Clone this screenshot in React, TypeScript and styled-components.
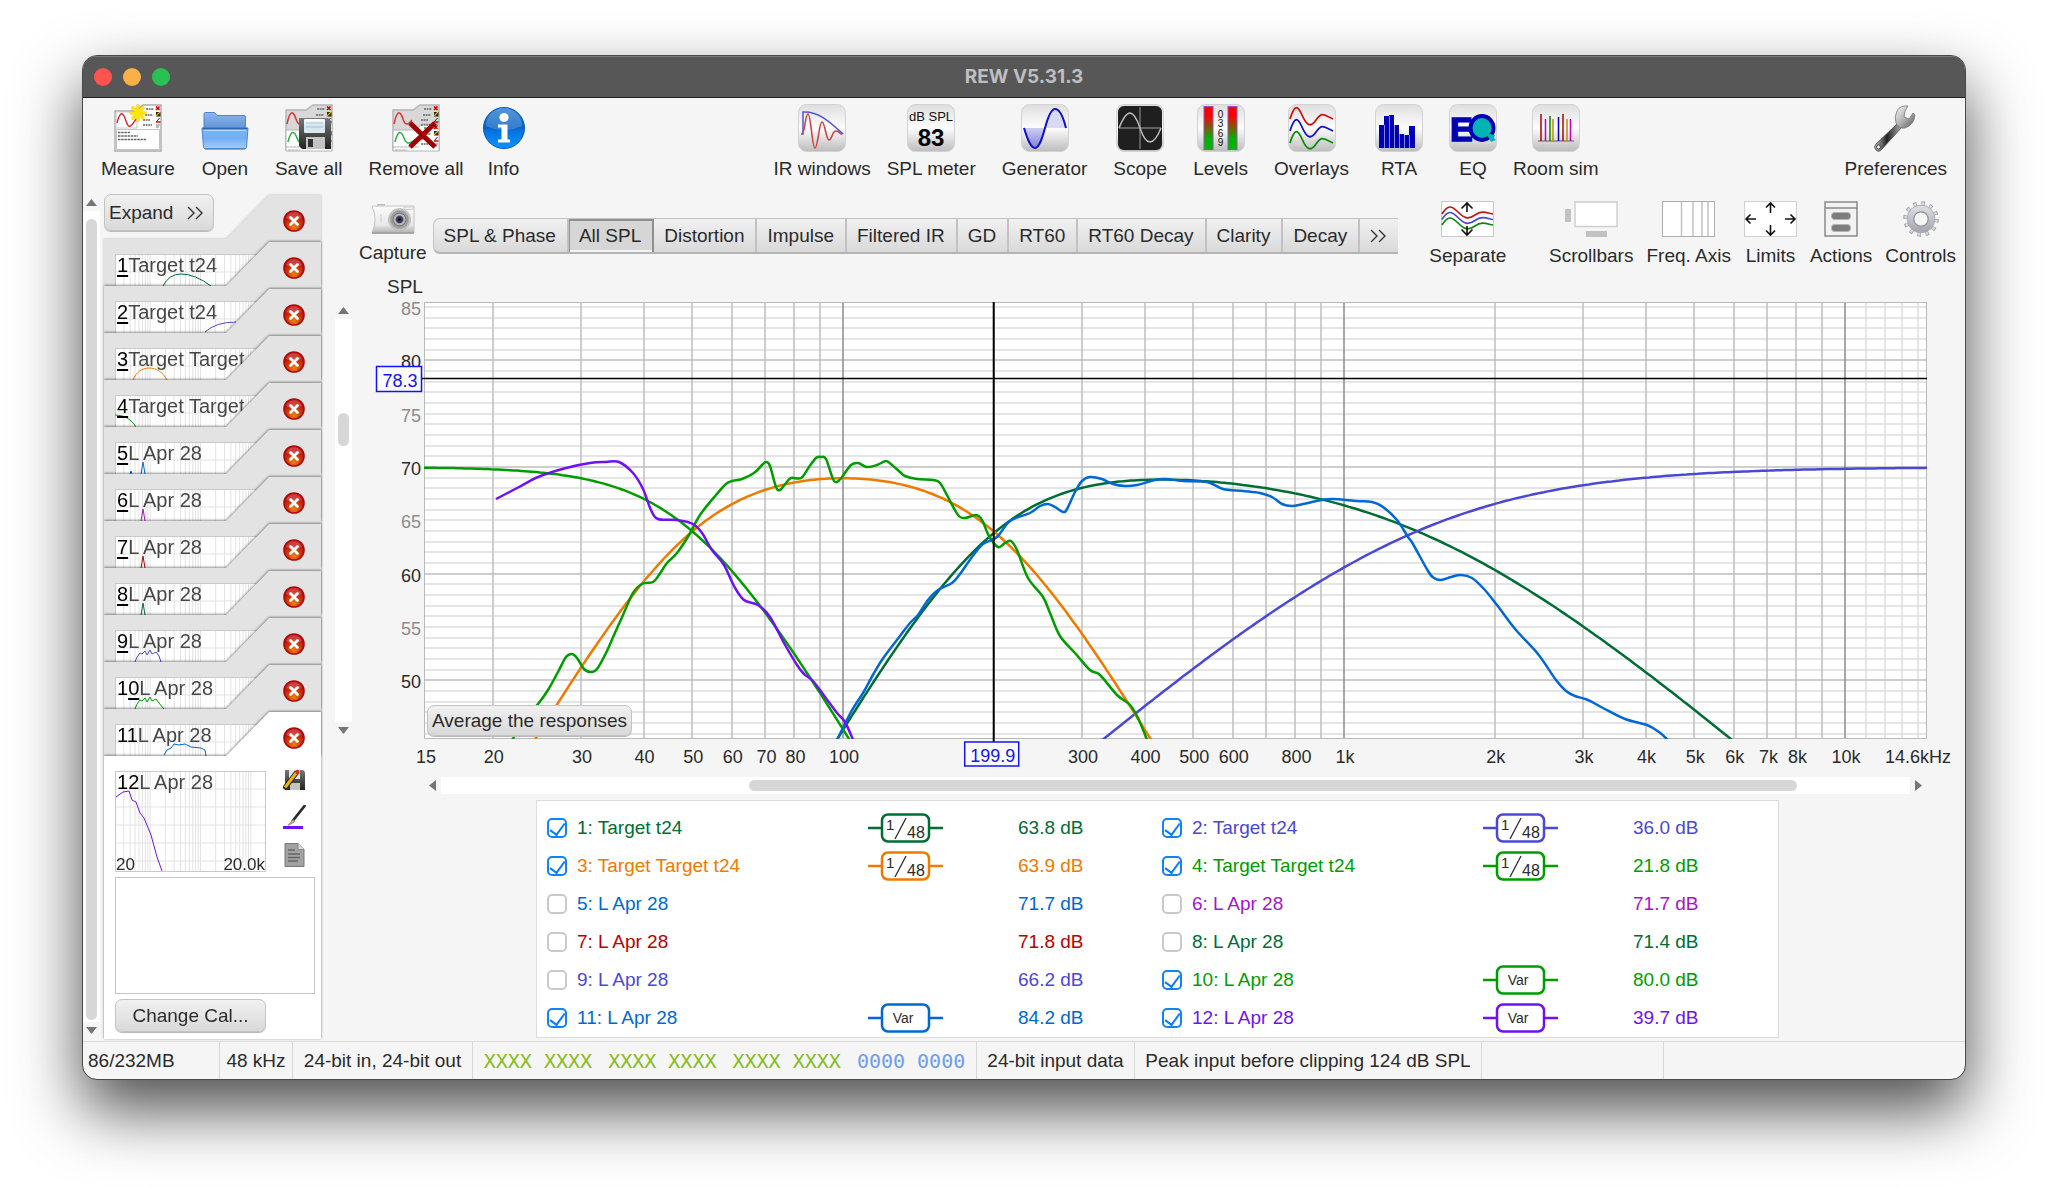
import React, { useState } from 'react';
import styled, { createGlobalStyle, css } from 'styled-components';

const SANS = '"Liberation Sans", Arial, sans-serif';
const INK = '#2b2b2b';
const PANEL = '#f5f5f5';

const C = {
  forest: '#006d35',
  indigo: '#4b48d6',
  orange: '#ee7a00',
  green: '#009c00',
  blue: '#0068d4',
  magenta: '#a814c8',
  red: '#b80000',
  violet: '#6e12f5',
};

const GlobalStyle = createGlobalStyle`
  * { box-sizing: border-box; }
  body { margin: 0; background: #fff; font-family: ${SANS}; font-size: 19px; line-height: 22px; color: ${INK}; }
  button, input, textarea { font: inherit; color: inherit; margin: 0; }
  svg { display: block; }
  svg text { font-family: ${SANS}; }
`;

/* ---------- window ---------- */

const Page = styled.div`
  min-height: 100vh;
  padding: 55px 82px 100px;
  overflow: hidden;
`;

const Window = styled.div`
  border: 1px solid #4a4a4a;
  border-radius: 15px;
  background: ${PANEL};
  background-clip: padding-box;
  box-shadow: 0 30px 65px rgba(0, 0, 0, 0.7);
  overflow: hidden;
`;

const TitleBar = styled.header`
  display: grid;
  grid-template-columns: 1fr auto 1fr;
  align-items: center;
  height: 42px;
  padding: 0 11px;
  background: #575757;
  border-top: 1px solid #7a7a7a;
  border-bottom: 1px solid #1f1f1f;
`;

const Lights = styled.div`
  display: flex;
  gap: 11px;
`;

const Light = styled.button<{ $color: string }>`
  width: 18px;
  height: 18px;
  padding: 0;
  border: 0;
  border-radius: 50%;
  background: ${p => p.$color};
`;

const Title = styled.h1`
  margin: 0;
  font: 700 19px/22px Inter, ${SANS};
  color: #bfbfbf;
`;

/* ---------- toolbar ---------- */

const Toolbar = styled.nav`
  display: flex;
  justify-content: space-between;
  align-items: flex-start;
  height: 92px;
  padding: 6px 18px 0;
`;

const ToolGroup = styled.div<{ $gap?: number }>`
  display: flex;
  gap: ${p => p.$gap ?? 26}px;
`;

const ToolButton = styled.button<{ $gap?: number }>`
  display: flex;
  flex-direction: column;
  align-items: center;
  gap: ${p => p.$gap ?? 6}px;
  padding: 0;
  border: 0;
  background: none;
  white-space: nowrap;
`;

function Tool({ icon, label, gap }: { icon: React.ReactNode; label: string; gap?: number }) {
  return (
    <ToolButton type="button" $gap={gap}>
      {icon}
      <span>{label}</span>
    </ToolButton>
  );
}

const Icon = ({ children, w = 48, h = 48 }: { children: React.ReactNode; w?: number; h?: number }) => (
  <svg width={w} height={h} viewBox={`0 0 ${w} ${h}`} fill="none" aria-hidden="true">
    {children}
  </svg>
);

const Tile = ({ children }: { children: React.ReactNode }) => (
  <Icon>
    <rect x="0.5" y="0.5" width="47" height="47" rx="8" fill="url(#tile)" stroke="#d2d2d2" />
    {children}
  </Icon>
);

const SharedDefs = () => (
  <svg width="0" height="0" style={{ position: 'absolute' }} aria-hidden="true">
    <defs>
      <linearGradient id="tile" x1="0" y1="0" x2="0" y2="1">
        <stop offset="0" stopColor="#dedede" />
        <stop offset="0.5" stopColor="#fdfdfd" />
        <stop offset="1" stopColor="#bcbcbc" />
      </linearGradient>
      <linearGradient id="folderBack" x1="0" y1="0" x2="0" y2="1">
        <stop offset="0" stopColor="#8fb6e8" />
        <stop offset="1" stopColor="#5f93d8" />
      </linearGradient>
      <linearGradient id="folderFront" x1="0" y1="0" x2="0" y2="1">
        <stop offset="0" stopColor="#7db4f6" />
        <stop offset="0.5" stopColor="#73adf3" />
        <stop offset="1" stopColor="#a3cdfc" />
      </linearGradient>
      <linearGradient id="info" x1="0" y1="0" x2="0" y2="1">
        <stop offset="0" stopColor="#2c7fd0" />
        <stop offset="0.5" stopColor="#0a62c4" />
        <stop offset="0.55" stopColor="#0670de" />
        <stop offset="1" stopColor="#0a95ff" />
      </linearGradient>
      <linearGradient id="meter" x1="0" y1="0" x2="0" y2="1">
        <stop offset="0.2" stopColor="#ff0000" />
        <stop offset="0.75" stopColor="#00b400" />
      </linearGradient>
      <linearGradient id="sineFill" x1="0" y1="0" x2="0" y2="1">
        <stop offset="0" stopColor="#cfcfF2" />
        <stop offset="1" stopColor="#8080d8" />
      </linearGradient>
      <linearGradient id="disk" x1="0" y1="0" x2="0" y2="1">
        <stop offset="0" stopColor="#777" />
        <stop offset="1" stopColor="#222" />
      </linearGradient>
      <linearGradient id="diskLabel" x1="0" y1="0" x2="0" y2="1">
        <stop offset="0" stopColor="#fff" />
        <stop offset="0.5" stopColor="#cfe3ee" />
        <stop offset="1" stopColor="#dfeaf0" />
      </linearGradient>
      <radialGradient id="close" cx="0.5" cy="0.8" r="0.6">
        <stop offset="0" stopColor="#f08010" />
        <stop offset="0.6" stopColor="#cc3a08" />
        <stop offset="1" stopColor="#c01010" />
      </radialGradient>
      <linearGradient id="steel" x1="0" y1="0" x2="1" y2="0">
        <stop offset="0" stopColor="#c9c9c9" />
        <stop offset="0.45" stopColor="#222" />
        <stop offset="1" stopColor="#b5b5b5" />
      </linearGradient>
      <linearGradient id="jaw" x1="0" y1="0" x2="1" y2="1">
        <stop offset="0" stopColor="#fafafa" />
        <stop offset="0.5" stopColor="#b4b4b4" />
        <stop offset="1" stopColor="#555" />
      </linearGradient>
      <linearGradient id="gear" x1="0" y1="0" x2="0" y2="1">
        <stop offset="0" stopColor="#d9d9df" />
        <stop offset="1" stopColor="#a9a9b4" />
      </linearGradient>
      <linearGradient id="camera" x1="0" y1="0" x2="0" y2="1">
        <stop offset="0" stopColor="#fbfbfb" />
        <stop offset="0.7" stopColor="#e8e8e8" />
        <stop offset="1" stopColor="#b0b0b0" />
      </linearGradient>
      <radialGradient id="lens">
        <stop offset="0" stopColor="#0c1030" />
        <stop offset="0.3" stopColor="#444a60" />
        <stop offset="0.4" stopColor="#b9b9b9" />
        <stop offset="0.75" stopColor="#999" />
        <stop offset="1" stopColor="#dedede" />
      </radialGradient>
    </defs>
  </svg>
);

const Scribbles = ({ y }: { y: number }) => (
  <g>
    <path d={`M32 ${y}h8M31 ${y + 6}h8M29 ${y + 11}h7M29 ${y + 16}h9`} stroke="#666" strokeWidth="1.4" strokeDasharray="2 0.6" />
    <path d={`M42 ${y - 2.5}l3.5 3.5M45.5 ${y - 2.5}l-3.5 3.5`} stroke="#c00" strokeWidth="1.6" />
    <rect x="42" y={y + 3} width="4.5" height="4.5" fill="#222" />
    <path d={`M42 ${y + 7}l4-4`} stroke="#eab000" strokeWidth="1.3" />
    <path d={`M45.5 ${y + 9}l-3 3.5`} stroke="#222" />
    <path d={`M42 ${y + 13}h4.5`} stroke="#d00" strokeWidth="1.3" />
    <path d={`M42 ${y + 16}h4M42 ${y + 18}h3`} stroke="#777" />
  </g>
);

const Star = () => (
  <g strokeLinecap="round">
    <path d="M24 2v14M17 9h14M19 4l10 10M29 4L19 14" stroke="#d9a400" strokeWidth="4" opacity="0.4" />
    <path d="M24 2v14M17 9h14M19 4l10 10M29 4L19 14" stroke="#ffe600" strokeWidth="2.6" />
  </g>
);

const MeasureIcon = () => (
  <Icon>
    <path d="M1 7h21l7-6h18v46H1z" fill="#fff" stroke="#ababab" strokeWidth="1.4" />
    <path d="M2 8h21v16H2z" fill="#fff" stroke="#c8c8c8" />
    <path d="M3 19c3-12 6-12 9-2s6 4 10-2" stroke="#d23" strokeWidth="1.4" />
    <path d="M2.5 25.5h43v20h-43z" fill="#fff" stroke="#c4c4c4" />
    <path d="M4 28.5h12M4 32h20M4 35.5h28" stroke="#666" strokeWidth="1.5" strokeDasharray="2.5 0.7" />
    <Scribbles y={5} />
    <Star />
  </Icon>
);

const Stack = () => (
  <g>
    <path d="M1 47V6h20l7-5h19v46" fill="#d8d8d8" stroke="#b4b4b4" strokeWidth="1.4" />
    <path d="M2 20c3-14 6-14 9-5s6 4 9 1" stroke="#d33" strokeWidth="1.5" />
    <path d="M1 26h22l7-6h17v27H1z" fill="#fff" stroke="#b4b4b4" />
    <path d="M3 38c3-12 6-12 9-4s6 5 12 1" stroke="#3a4" strokeWidth="1.5" />
    <Scribbles y={5} />
    <Scribbles y={24} />
    <path d="M1 43h26M3 46h12" stroke="#aaa" strokeDasharray="3 0.6" />
  </g>
);

const SaveIcon = () => (
  <Icon>
    <Stack />
    <path d="M14 14h29l3 3v28H17l-3-3z" fill="url(#disk)" />
    <rect x="19" y="15" width="21" height="14" rx="1" fill="url(#diskLabel)" />
    <path d="M21 19h17M21 23h17" stroke="#a9c4d3" />
    <rect x="21" y="33" width="19" height="12" fill="#c4c4c4" />
    <rect x="23" y="35" width="5" height="8" fill="#333" />
  </Icon>
);

const RemoveIcon = () => (
  <Icon>
    <Stack />
    <path d="M18 19l25 24M43 19L18 43" stroke="#a00000" strokeWidth="5" />
  </Icon>
);

const FolderIcon = () => (
  <Icon>
    <path d="M3 10q0-1.500 1.500-1.500h9l2.500 3h27q1.500 0 1.500 1.500v12H3z" fill="url(#folderBack)" stroke="#4f84cc" />
    <path d="M1 24h46l-1.500 19.500q0 1-1.500 1H4q-1.500 0-1.500-1z" fill="url(#folderFront)" stroke="#4a86d4" />
    <path d="M1.500 24.500h45" stroke="#2d66b8" strokeWidth="1.5" />
    <path d="M3 26.500h42" stroke="#b7d8ff" />
    <path d="M4 45.500h40" stroke="#9aa4b2" />
  </Icon>
);

const InfoIcon = () => (
  <Icon>
    <circle cx="24" cy="24" r="20.5" fill="url(#info)" stroke="#0a5cb8" />
    <path d="M6 22a18 18 0 0 1 36 0q-18 8-36 0z" fill="#fff" opacity="0.18" />
    <circle cx="24" cy="13.5" r="4.6" fill="#fff" />
    <path d="M18 20.5h9.500v15H30v3H18v-3h3.500v-12H18z" fill="#fff" />
  </Icon>
);

const IRIcon = () => (
  <Tile>
    <path d="M3 30h2V8c16-1 28 11 40 22" stroke="#5555d8" strokeWidth="1.5" />
    <path d="M4 30c3 0 3-20 6-20s4 34 7 34 4-26 7-26 4 18 7 18 3-9 7-9 3 3 6 3" stroke="#cc4444" strokeWidth="1.6" />
  </Tile>
);

const MeterIcon = () => (
  <Tile>
    <text x="24" y="17" fontSize="13" textAnchor="middle" fill="#111">dB SPL</text>
    <text x="24" y="42" fontSize="24" fontWeight="700" textAnchor="middle" fill="#000">83</text>
  </Tile>
);

const GeneratorIcon = () => (
  <Tile>
    <path d="M3 24c4 13 7 20 11 20s7-9 10-20z" fill="url(#sineFill)" />
    <path d="M24 24c3-11 6-19 10-19s8 7 11 19z" fill="#d9d9f4" />
    <path d="M3 24c4 13 7 20 11 20s7-9 10-20 6-19 10-19 8 7 11 19" stroke="#1010c8" strokeWidth="2" />
  </Tile>
);

const ScopeIcon = () => (
  <Tile>
    <rect x="2" y="2" width="44" height="44" rx="6" fill="#1f1f1f" />
    <path d="M24 3v42M3 24h42" stroke="#777" strokeWidth="1.4" />
    <path d="M3 24c4-10 7-15 11-15s7 6 10 15 6 14 10 14 7-4 11-14" stroke="#bbb" strokeWidth="1.5" />
  </Tile>
);

const LevelsIcon = () => (
  <Tile>
    <rect x="7" y="2.5" width="9" height="43" fill="url(#meter)" stroke="#9a50c0" />
    <rect x="31" y="2.5" width="9" height="43" fill="url(#meter)" stroke="#9a50c0" />
    {[0, 3, 6, 9].map((n, i) => (
      <text key={n} x="23.5" y={14 + i * 9.4} fontSize="10" textAnchor="middle" fill="#111">{n}</text>
    ))}
  </Tile>
);

const OverlaysIcon = () => (
  <Tile>
    {['#cc1111', '#1111cc', '#0a8c0a'].map((c, i) => (
      <path key={c} transform={`translate(0 ${i * 12})`} d="M2 15C7-1 10 2 14 11s8 14 14 5 8-5 17-1" stroke={c} strokeWidth="1.8" />
    ))}
  </Tile>
);

const RTAIcon = () => (
  <Tile>
    <path d="M4 44V21h5V12h5v-1h5v10h5v9h5v1h5v-9h6v22z" fill="#0000b4" />
    <path d="M9.500 21v23M14.500 12v32M19.500 21v23M24.500 30v14M29.500 31v13M34.500 31v13" stroke="#dedeff" strokeWidth="0.6" />
  </Tile>
);

const EQIcon = () => (
  <Tile>
    <text x="1" y="37" fontSize="34" fontWeight="700" fill="#0000b4" stroke="#0000b4" strokeWidth="1.5">E</text>
    <ellipse cx="33" cy="24" rx="11.5" ry="12" fill="#00b4b4" stroke="#0000b4" strokeWidth="4" />
    <path d="M37 29l9 2-1 3 2 2-5 2z" fill="#00b4b4" />
  </Tile>
);

const RoomIcon = () => (
  <Tile>
    <path d="M6 37h36" stroke="#888" strokeWidth="1.4" />
    {[
      [9, 10, '#b00000'], [13.5, 15, '#c400c4'], [18, 12, '#008a00'], [21, 15, '#c08a00'], [26.5, 13, '#0000c0'],
      [31, 10, '#b00000'], [35, 15, '#c08a00'], [38.5, 15, '#c400c4'],
    ].map(([x, y, c]) => (
      <path key={x} d={`M${x} ${y}V37`} stroke={c as string} strokeWidth="1.5" />
    ))}
  </Tile>
);

const WrenchIcon = () => (
  <Icon>
    <path d="M25 20L4 40q-3 3 0 6t6-1L30 23z" fill="url(#steel)" stroke="#444" strokeWidth="0.8" />
    <circle cx="6.5" cy="43" r="2" fill="#f5f5f5" stroke="#444" />
    <path d="M36 2q-8-1-11 5t-1 12q3 6 9 5 9-3 10-13l-2-2-4 6-5-2 1-6z" fill="url(#jaw)" stroke="#777" strokeWidth="0.8" />
  </Icon>
);

/* ---------- shared controls ---------- */

const raised = css`
  border: 1px solid #c3c3c3;
  background: linear-gradient(#f1f1f1, #d9d9d9);
`;

const PushButton = styled.button<{ $w?: number; $h: number; $start?: boolean }>`
  ${raised}
  display: inline-flex;
  align-items: center;
  justify-content: ${p => (p.$start ? 'flex-start' : 'center')};
  gap: 14px;
  width: ${p => (p.$w ? `${p.$w}px` : 'auto')};
  height: ${p => p.$h}px;
  padding: 0 4px;
  border-radius: 7px;
  box-shadow: 0 1px 0 #b9b9b9;
  white-space: nowrap;
`;

const Chevrons = () => (
  <Icon w={17} h={14}>
    <path d="M1 1l6 6-6 6M9 1l6 6-6 6" stroke="#333" strokeWidth="1.4" />
  </Icon>
);

const ScrollBox = styled.div<{ $across?: boolean }>`
  display: flex;
  flex: 1;
  flex-direction: ${p => (p.$across ? 'row' : 'column')};
  width: ${p => (p.$across ? 'auto' : '17px')};
  height: ${p => (p.$across ? '17px' : 'auto')};
`;

const ScrollArrow = styled.button`
  display: grid;
  place-items: center;
  flex: none;
  width: 17px;
  height: 17px;
  padding: 0;
  border: 0;
  background: none;
`;

const Track = styled.div<{ $across?: boolean }>`
  display: flex;
  flex: 1;
  flex-direction: ${p => (p.$across ? 'row' : 'column')};
  padding: ${p => (p.$across ? '3px 0' : '0 3px')};
  background: #fff;
`;

const TrackPart = styled.div<{ $grow: number; $thumb?: boolean }>`
  flex: ${p => p.$grow} 1 0;
  border-radius: 6px;
  background: ${p => (p.$thumb ? '#d7d7d7' : 'none')};
`;

function Scroller({ across, before, thumb, after, name }: { across?: boolean; before: number; thumb: number; after: number; name: string }) {
  const back = across ? 'M11 2v11L4 7.500z' : 'M2 11h11L7.500 4z';
  const forward = across ? 'M4 2v11l7-5.500z' : 'M2 4h11l-5.500 7z';
  return (
    <ScrollBox $across={across}>
      <ScrollArrow type="button" aria-label={`${name} back`}>
        <Icon w={15} h={15}><path d={back} fill="#757575" /></Icon>
      </ScrollArrow>
      <Track $across={across}>
        <TrackPart $grow={before} />
        <TrackPart $grow={thumb} $thumb />
        <TrackPart $grow={after} />
      </Track>
      <ScrollArrow type="button" aria-label={`${name} forward`}>
        <Icon w={15} h={15}><path d={forward} fill="#757575" /></Icon>
      </ScrollArrow>
    </ScrollBox>
  );
}

/* ---------- measurement list ---------- */

const Body = styled.div`
  display: flex;
`;

const Sidebar = styled.aside`
  display: flex;
  flex: none;
  gap: 4px;
  padding: 4px 13px 2px 0;
`;

const CardList = styled.div`
  display: flex;
  flex-direction: column;
  width: 218px;
`;

const ExpandRow = styled.div`
  position: relative;
  z-index: 1;
  height: 38px;
  margin-bottom: -39px;
`;

const CardShadow = styled.div<{ $last?: boolean; $first?: boolean }>`
  margin-bottom: ${p => (p.$last ? 0 : -46)}px;
  filter: ${p => (p.$first
    ? 'drop-shadow(0 0 1px rgba(0,0,0,0.25))'
    : 'drop-shadow(0 -1px 1px rgba(0,0,0,0.3)) drop-shadow(0 0 1px rgba(0,0,0,0.25))')};
`;

const Card = styled.article<{ $last?: boolean }>`
  height: ${p => (p.$last ? 329 : 93)}px;
  background: ${p => (p.$last ? '#fff' : '#e3e3e3')};
  clip-path: polygon(0 46px, 122px 46px, 165px 2px, 217px 2px, 217px 100%, 0 100%);
`;

const CardTop = styled.div`
  display: flex;
  height: 162px;
  padding-left: 11px;
`;

const Thumb = styled.div`
  position: relative;
  width: 151px;
  height: 101px;
  margin-top: 61px;
`;

const ThumbLabel = styled.div`
  position: absolute;
  top: 0;
  left: 2px;
  white-space: nowrap;
  font-size: 20px;
  color: #474747;
  b { font-weight: 400; color: #000; }
  u { text-decoration-thickness: 2px; text-underline-offset: 3px; text-decoration-skip-ink: none; }
`;

const CardActions = styled.div`
  display: flex;
  flex-direction: column;
  gap: 14px;
  margin: 17px 0 0 17px;
`;

const IconButton = styled.button<{ $after?: number }>`
  padding: 0 0 ${p => p.$after ?? 0}px;
  border: 0;
  background: none;
`;

const Notes = styled.textarea`
  display: block;
  width: 200px;
  height: 117px;
  margin: 5px 0 5px 11px;
  border: 1px solid #c6c6c6;
  background: #fff;
  resize: none;
`;

const CardFoot = styled.div`
  padding-left: 11px;
`;

const ThumbSvg = styled.svg`
  overflow: visible;
`;

const thumbX = (f: number) => (Math.log10(f / 20) / 3) * 151;
const THUMB_FREQS = [30, 40, 50, 60, 70, 80, 90, 100, 200, 300, 400, 500, 600, 700, 800, 900, 1000, 2000, 3000, 4000, 5000, 6000, 7000, 8000, 9000, 10000];

function ThumbGraph({ path, color, ends }: { path: string; color: string; ends?: boolean }) {
  return (
    <ThumbSvg width="151" height="101" viewBox="0 0 151 101" aria-hidden="true">
      <rect x="0.5" y="0.5" width="150" height="100" fill="#fff" stroke="#c9c9c9" />
      <g stroke="#e3e3e3">
        {THUMB_FREQS.map(f => <line key={f} x1={thumbX(f)} x2={thumbX(f)} y1="1" y2="100" />)}
        {[18, 36, 54, 72, 90].map(y => <line key={y} x1="1" x2="150" y1={y} y2={y} />)}
      </g>
      <path d={path} fill="none" stroke={color} strokeWidth="1" />
      {ends && (
        <g fontSize="17" fill={INK}>
          <text x="1" y="99">20</text>
          <text x="150" y="99" textAnchor="end">20.0k</text>
        </g>
      )}
    </ThumbSvg>
  );
}

const SPIKE = 'M26 32L28 20L30 32';
const RIPPLE = 'M20 32L22 27L25 23L27 24L30 21L32 25L35 20L37 24L41 22L44 26';

const THUMBS = [
  { id: '1', name: 'Target t24', color: C.forest, path: 'M48 32Q54 20 66 20Q80 20 96 32' },
  { id: '2', name: 'Target t24', color: C.indigo, path: 'M90 31Q101 21 121 21' },
  { id: '3', name: 'Target Target', color: C.orange, path: 'M18 32C24 16 44 16 52 32' },
  { id: '4', name: 'Target Target', color: C.green, path: 'M0 20Q14 20 21 32' },
  { id: '5', name: 'L Apr 28', color: C.blue, path: `M15 32L16 29L17 32${SPIKE}` },
  { id: '6', name: 'L Apr 28', color: C.magenta, path: SPIKE },
  { id: '7', name: 'L Apr 28', color: C.red, path: SPIKE },
  { id: '8', name: 'L Apr 28', color: C.forest, path: SPIKE },
  { id: '9', name: 'L Apr 28', color: C.indigo, path: `${RIPPLE}L46 32` },
  { id: '10', name: 'L Apr 28', color: C.green, path: `${RIPPLE}L49 32` },
  { id: '11', name: 'L Apr 28', color: C.blue, path: 'M49 31L52 26L56 24L59 20L64 21L70 20L76 23L86 24L90 26L91 32' },
  { id: '12', name: 'L Apr 28', color: C.violet, path: 'M1 26L8 21L14 20L17 29L21 31L25 42L29 47L36 64L42 86L47 100' },
];

const CloseGlyph = () => (
  <Icon w={24} h={22}>
    <circle cx="11" cy="11" r="10" fill="url(#close)" stroke="#b00808" strokeWidth="1.6" />
    <path d="M3 8a8.500 8.500 0 0 1 16 0q-8 4-16 0z" fill="#fff" opacity="0.2" />
    <path d="M7.500 7.500l7 7M14.500 7.500l-7 7" stroke="#fff" strokeWidth="2.8" strokeLinecap="round" />
  </Icon>
);

function MeasurementCard({ m, index }: { m: (typeof THUMBS)[number]; index: number }) {
  const last = index === THUMBS.length - 1;
  const head = m.id.slice(0, -1);
  const key = m.id.slice(-1);
  return (
    <CardShadow $last={last} $first={index === 0}>
      <Card $last={last}>
        <CardTop>
          <Thumb>
            <ThumbGraph path={m.path} color={m.color} ends={last} />
            <ThumbLabel>
              <b>{head}{index < 10 ? <u>{key}</u> : key}</b>{m.name}
            </ThumbLabel>
          </Thumb>
          <CardActions>
            <IconButton type="button" $after={6} aria-label={`Remove measurement ${m.id}`}><CloseGlyph /></IconButton>
            {last && (
              <>
                <IconButton type="button" aria-label="Save measurement">
                  <Icon w={24} h={22}>
                    <path d="M2 1h18l2 2v18H4l-2-2z" fill="url(#disk)" />
                    <rect x="6" y="1" width="11" height="9" fill="#dfe6ea" />
                    <rect x="7" y="14" width="10" height="7" fill="#c4c4c4" />
                    <path d="M1 20L14 3" stroke="#222" strokeWidth="5" />
                    <path d="M2 18.500L13.500 3.500" stroke="#f0b400" strokeWidth="3" />
                    <circle cx="14.5" cy="3" r="2.2" fill="#e03020" />
                  </Icon>
                </IconButton>
                <IconButton type="button" aria-label="Trace colour">
                  <Icon w={24} h={24}>
                    <path d="M21.500 1L10 15.500" stroke="#2a2a2a" strokeWidth="2.8" strokeLinecap="round" />
                    <path d="M10 14.500l-5 6 7-4z" fill="#c9ab7c" stroke="#8b734e" strokeWidth="0.7" />
                    <rect x="0" y="21" width="20" height="3" fill={C.violet} />
                  </Icon>
                </IconButton>
                <IconButton type="button" aria-label="Notes">
                  <Icon w={24} h={24}>
                    <path d="M2 .5h13l6 6v17H2z" fill="#a2a2a2" stroke="#787878" />
                    <path d="M15 .5v6h6" fill="#ddd" stroke="#888" />
                    <path d="M5 7h7M5 11h12M5 14.500h12M5 18h10" stroke="#666" strokeWidth="1.5" />
                  </Icon>
                </IconButton>
              </>
            )}
          </CardActions>
        </CardTop>
        {last && (
          <>
            <Notes aria-label="Measurement notes" />
            <CardFoot><PushButton type="button" $w={151} $h={33}>Change Cal...</PushButton></CardFoot>
          </>
        )}
      </Card>
    </CardShadow>
  );
}

/* ---------- graph header ---------- */

const GraphScroll = styled.div`
  display: flex;
  flex: none;
  width: 17px;
  height: 437px;
  margin-top: 112px;
`;

const Main = styled.main`
  flex: 1;
  min-width: 0;
  padding: 0 5px 0 3px;
`;

const GraphHeader = styled.div`
  display: flex;
  align-items: flex-start;
  height: 82px;
  padding: 11px 4px 0 4px;
`;

const Lowered = styled.div<{ $top: number }>`
  padding-top: ${p => p.$top}px;
`;

const Tabs = styled.div`
  ${raised}
  display: flex;
  height: 36px;
  margin: 17px 31px 0 6px;
  border-bottom: 2px solid #b4b4b4;
  border-right: 0;
  border-radius: 7px 0 0 7px;
  overflow: hidden;
`;

const Tab = styled.button<{ $on?: boolean }>`
  display: flex;
  align-items: center;
  padding: 0 11px 0 10px;
  border: 0;
  border-right: 2px solid #c2c2c2;
  background: none;
  white-space: nowrap;
  &:last-child { border-right-width: 0; }
  ${p => p.$on && css`
    background: #d6d6d6;
    border-right-color: #8f8f8f;
    box-shadow: inset 1px 2px 0 #8f8f8f, inset 0 -2px 0 #f4f4f4;
  `}
`;

const ViewTools = styled.div`
  display: flex;
  gap: 13px;
  margin-left: auto;
`;

const CaptureIcon = () => (
  <Icon w={44} h={30}>
    <path d="M1 2q6 13 0 27h42V2z" fill="url(#camera)" stroke="#c4c4c4" />
    <path d="M6 .7h8" stroke="#bbb" strokeWidth="1.5" />
    <rect x="33" y="3" width="9" height="2.5" fill="#eee" stroke="#ccc" strokeWidth="0.7" />
    <path d="M10 10v8" stroke="#ccc" />
    <circle cx="28.5" cy="15.5" r="11" fill="url(#lens)" stroke="#aaa" strokeWidth="0.7" />
    <circle cx="28.5" cy="15.5" r="6.5" stroke="#777" />
    <path d="M1 29h42" stroke="#999" strokeWidth="1.3" />
  </Icon>
);

const SeparateIcon = () => (
  <Icon w={53} h={36}>
    <rect x="0.5" y="0.5" width="52" height="35" fill="#fff" stroke="#c8c8c8" />
    {['#c01818', '#4848d8', '#0a8c0a'].map((c, i) => (
      <path key={c} transform={`translate(0 ${i * 5.5})`} d="M1 13C7 3 11 5 17 11s10 8 17 3 12-2 18-1" stroke={c} strokeWidth="1.7" />
    ))}
    <path d="M26 11V2M20.500 7.500L26 2l5.500 5.500M26 25v9M20.500 28.500L26 34l5.500-5.500" stroke="#111" strokeWidth="1.6" />
  </Icon>
);

const ScrollbarsIcon = () => (
  <Icon w={53} h={36}>
    <rect x="10" y="1" width="42" height="24.5" fill="#fff" stroke="#d0d0d0" strokeWidth="1.5" />
    <rect x="0" y="8" width="6" height="13" fill="#c2c2c2" />
    <rect x="21" y="30" width="21" height="6" fill="#c2c2c2" />
  </Icon>
);

const FreqAxisIcon = () => (
  <Icon w={53} h={36}>
    <rect x="0.5" y="0.5" width="52" height="35" fill="#fff" stroke="#adadad" />
    <path d="M19.500 1v34M31 1v34M40 1v34M46 1v34" stroke="#c2c2c2" strokeWidth="1.5" />
  </Icon>
);

const LimitsIcon = () => (
  <Icon w={53} h={36}>
    <rect x="0.5" y="0.5" width="52" height="35" fill="#fff" stroke="#d0d0d0" />
    <path d="M26.500 12V2M22 6.500L26.500 2 31 6.500M26.500 24v10M22 29.500l4.500 4.500 4.500-4.500M12 18H2M6.500 13.500L2 18l4.500 4.500M41 18h10M46.500 13.500L51 18l-4.500 4.500" stroke="#111" strokeWidth="1.6" />
  </Icon>
);

const ActionsIcon = () => (
  <Icon w={34} h={36}>
    <rect x="1" y="1" width="32" height="34" fill="#f2f2f2" stroke="#8a8a8a" strokeWidth="1.5" />
    <path d="M1 7h32" stroke="#8a8a8a" strokeWidth="1.5" />
    <rect x="7.5" y="11.5" width="19" height="7" rx="3" fill="#7d7d7d" stroke="#b5b5b5" />
    <rect x="7.5" y="23.5" width="19" height="7" rx="3" fill="#7d7d7d" stroke="#b5b5b5" />
  </Icon>
);

const GearIcon = () => (
  <Icon w={36} h={36}>
    <circle cx="18" cy="18" r="15.5" stroke="#9a9aa2" strokeWidth="4.5" strokeDasharray="3.4 4.716" />
    <circle cx="18" cy="18" r="15.3" stroke="#dcdce2" strokeWidth="3" strokeDasharray="2.2 5.811" strokeDashoffset="-0.6" />
    <circle cx="18" cy="18" r="10.5" stroke="url(#gear)" strokeWidth="6.5" />
    <circle cx="18" cy="18" r="13.9" stroke="#a4a4ac" strokeWidth="0.8" />
    <circle cx="18" cy="18" r="7.2" stroke="#8e8e98" strokeWidth="1.2" />
  </Icon>
);

const TAB_NAMES = ['SPL & Phase', 'All SPL', 'Distortion', 'Impulse', 'Filtered IR', 'GD', 'RT60', 'RT60 Decay', 'Clarity', 'Decay'];

/* ---------- graph ---------- */

const AxisTitle = styled.div`
  height: 30px;
  padding-left: 32px;
  line-height: 30px;
`;

const PlotBox = styled.div`
  position: relative;
  height: 474px;
  margin: 0 33px 0 69px;
`;

const PlotSvg = styled.svg`
  width: 100%;
  height: 100%;
  overflow: visible;
`;

const AverageSpot = styled.div`
  position: absolute;
  left: 3px;
  top: 403px;
`;

const HScroll = styled.div`
  display: flex;
  margin: 1px 33px 6px 69px;
`;

const W = 1503;
const H = 437;
const px = (f: number) => 419 + 501 * Math.log10(f / 100);
const py = (db: number) => 165 + (70 - db) * 10.66;
const pct = (x: number) => `${(x / W) * 100}%`;

/* Linkwitz-Riley target magnitudes in dB; order 4 = 24 dB/oct, order 2 = 12 dB/oct */
const lowPass = (fc: number, order: number) => (f: number) => -20 * Math.log10(1 + (f / fc) ** order);
const highPass = (fc: number, order: number) => (f: number) => -20 * Math.log10(1 + (fc / f) ** order);

function targetPath(...filters: Array<(f: number) => number>) {
  const out: string[] = [];
  for (let i = 0; i <= 400; i++) {
    const f = 14.53 * (14600 / 14.53) ** (i / 400);
    const y = py(70 + filters.reduce((sum, h) => sum + h(f), 0));
    out.push(`${px(f).toFixed(1)} ${Math.min(y, 600).toFixed(1)}`);
  }
  return `M${out.join('L')}`;
}

function smoothPath(p: number[][]) {
  let d = `M${p[0][0]} ${p[0][1]}`;
  for (let i = 0; i < p.length - 1; i++) {
    const a = p[Math.max(i - 1, 0)];
    const b = p[i];
    const c = p[i + 1];
    const e = p[Math.min(i + 2, p.length - 1)];
    d += `C${b[0] + (c[0] - a[0]) / 6} ${b[1] + (c[1] - a[1]) / 6} ${c[0] - (e[0] - b[0]) / 6} ${c[1] - (e[1] - b[1]) / 6} ${c[0]} ${c[1]}`;
  }
  return d;
}

const TRACE_12 = [[72, 197], [95, 185], [114, 175], [142, 166], [166, 161], [182, 160], [195, 160], [209, 171], [219, 187], [227, 208], [234, 217], [253, 218], [269, 222], [278, 231], [288, 248], [300, 263], [310, 284], [320, 298], [334, 303], [346, 315], [360, 341], [373, 363], [380, 372], [389, 379], [401, 395], [413, 411], [421, 420], [430, 440]];
const TRACE_10 = [[87, 440], [103, 414], [114, 402], [124, 388], [134, 370], [142, 355], [148, 352], [153, 356], [160, 367], [167, 370], [173, 367], [182, 351], [190, 333], [199, 313], [209, 291], [218, 282], [229, 280], [235, 273], [243, 261], [253, 251], [265, 233], [276, 213], [292, 193], [302, 182], [308, 179], [318, 177], [330, 171], [338, 163], [342, 160], [346, 164], [352, 185], [356, 188], [362, 181], [367, 176], [377, 176], [385, 165], [392, 156], [397, 155], [402, 157], [409, 177], [413, 180], [418, 175], [427, 163], [434, 161], [443, 165], [453, 163], [462, 159], [468, 163], [476, 170], [481, 174], [493, 177], [509, 178], [516, 181], [524, 195], [534, 213], [541, 216], [552, 213], [558, 218], [565, 234], [574, 245], [581, 241], [587, 239], [593, 248], [604, 276], [619, 295], [626, 311], [636, 334], [651, 351], [666, 368], [676, 373], [693, 393], [706, 403], [714, 416], [724, 440]];
const TRACE_11 = [[412, 440], [427, 410], [439, 391], [450, 371], [460, 355], [476, 334], [486, 321], [494, 313], [504, 298], [514, 288], [528, 281], [536, 272], [548, 255], [559, 242], [573, 235], [586, 219], [606, 211], [616, 204], [624, 202], [631, 205], [639, 210], [643, 207], [651, 190], [658, 179], [666, 175], [678, 177], [689, 182], [701, 184], [713, 183], [731, 178], [741, 177], [759, 179], [783, 180], [799, 187], [819, 189], [836, 191], [848, 195], [858, 202], [868, 204], [879, 202], [898, 198], [909, 197], [933, 199], [948, 200], [959, 205], [973, 218], [984, 235], [989, 242], [1004, 269], [1010, 276], [1017, 278], [1027, 275], [1037, 273], [1048, 276], [1060, 287], [1073, 303], [1092, 328], [1114, 352], [1132, 378], [1142, 389], [1151, 394], [1164, 398], [1179, 406], [1201, 417], [1223, 423], [1235, 430], [1246, 440]];

const TRACES = [
  { color: C.forest, d: targetPath(highPass(200, 4), lowPass(1400, 2)) },
  { color: C.indigo, d: targetPath(highPass(1400, 2)) },
  { color: C.orange, d: targetPath(highPass(50, 4), lowPass(200, 4)) },
  { color: C.green, d: targetPath(lowPass(50, 4)) },
  { color: C.green, d: smoothPath(TRACE_10) },
  { color: C.blue, d: smoothPath(TRACE_11) },
  { color: C.violet, d: smoothPath(TRACE_12) },
];

const MAJOR = [100, 1000, 10000];
const FREQS = [20, 30, 40, 50, 60, 70, 80, 90, 200, 300, 400, 500, 600, 700, 800, 900, 2000, 3000, 4000, 5000, 6000, 7000, 8000, 9000];
const FINE = [11000, 12000, 13000, 14000];
const LEVELS = Array.from({ length: 41 }, (_, i) => 85 - i);
const X_LABELS: Array<[number, string]> = [
  [20, '20'], [30, '30'], [40, '40'], [50, '50'], [60, '60'], [70, '70'], [80, '80'], [100, '100'], [300, '300'], [400, '400'], [500, '500'], [600, '600'], [800, '800'],
  [1000, '1k'], [2000, '2k'], [3000, '3k'], [4000, '4k'], [5000, '5k'], [6000, '6k'], [7000, '7k'], [8000, '8k'], [10000, '10k'],
];

const vLine = (f: number) => <line key={f} x1={Math.round(px(f))} x2={Math.round(px(f))} y1="0" y2={H} />;

function Graph() {
  const cx = px(199.9);
  const cy = 76.5;
  return (
    <PlotBox>
      <PlotSvg role="img" aria-label="All SPL graph">
        <svg width="100%" height={H} viewBox={`0 0 ${W} ${H}`} preserveAspectRatio="none" fill="none">
          <rect width={W} height={H} fill="#fff" />
          <g strokeWidth="1.5">
            <g stroke="#dcdcdc">{LEVELS.filter(v => v % 10).map(v => <line key={v} x1="0" x2={W} y1={Math.round(py(v))} y2={Math.round(py(v))} />)}</g>
            <g stroke="#dedede">{FINE.map(vLine)}</g>
            <g stroke="#bebebe">
              {LEVELS.filter(v => v % 10 === 0).map(v => <line key={v} x1="0" x2={W} y1={Math.round(py(v))} y2={Math.round(py(v))} />)}
              {FREQS.map(vLine)}
            </g>
            <g stroke="#8a8a8a">{MAJOR.map(vLine)}</g>
          </g>
          <rect x="0.5" y="0.5" width={W - 1} height={H - 1} stroke="#b9b9b9" />
          <g strokeWidth="2.5" strokeLinejoin="round">
            {TRACES.map((t, i) => <path key={i} d={t.d} stroke={t.color} vectorEffect="non-scaling-stroke" />)}
          </g>
        </svg>
        <g fontSize="18" textAnchor="end">
          {[85, 80, 75, 70, 65, 60, 55, 50].map(v => (
            <text key={v} x="-3" y={Math.round(py(v)) + 8} fill={v % 10 ? '#8c8c8c' : INK}>{v}</text>
          ))}
        </g>
        <g fontSize="18" textAnchor="middle" fill={INK}>
          <text x="2" y="461">15</text>
          {X_LABELS.map(([f, t]) => <text key={t} x={pct(px(f) + 1)} y="461">{t}</text>)}
          <text x={pct(1494)} y="461">14.6kHz</text>
        </g>
        <g stroke="#000" strokeWidth="2">
          <line x1="-3" x2="100%" y1={cy} y2={cy} strokeWidth="1.5" />
          <line x1={pct(cx)} x2={pct(cx)} y1="0" y2="440" />
        </g>
        <rect x="-47.5" y="64.5" width="45" height="25" fill="#fbfbfb" stroke="#1414f0" strokeWidth="1.5" />
        <text x="-24" y="85" fontSize="18" textAnchor="middle" fill="#1414f0">78.3</text>
        <svg x={pct(cx)} y="440" overflow="visible">
          <rect x="-29" y="0" width="54" height="24" fill="#fbfbfb" stroke="#1414f0" strokeWidth="1.5" />
          <text x="-1" y="20" fontSize="18" textAnchor="middle" fill="#1414f0">199.9</text>
        </svg>
      </PlotSvg>
      <AverageSpot><PushButton type="button" $h={31}>Average the responses</PushButton></AverageSpot>
    </PlotBox>
  );
}

/* ---------- legend ---------- */

const Legend = styled.section`
  display: grid;
  grid-template-columns: 1fr 1fr;
  grid-auto-rows: 38px;
  max-width: 1243px;
  margin: 0 auto 3px;
  padding: 8px 1px 0 10px;
  border: 1px solid #dcdcdc;
  background: #fff;
`;

const LegendItem = styled.div<{ $color: string }>`
  display: flex;
  align-items: center;
  color: ${p => p.$color};
`;

const LegendLabel = styled.label`
  display: flex;
  flex: 1;
  align-items: center;
  gap: 10px;
`;

const CheckBox = styled.input`
  appearance: none;
  display: grid;
  place-items: center;
  width: 20px;
  height: 20px;
  border: 2px solid #c9c9c9;
  border-radius: 5px;
  background: #fff;
  &:checked { border-color: #1183f5; }
  &:checked::after {
    content: '';
    width: 7px;
    height: 13px;
    margin-bottom: 3px;
    border: solid #0a7cf5;
    border-width: 0 2px 2px 0;
    transform: rotate(36deg);
  }
`;

const BadgeCell = styled.div`
  width: 150px;
`;

const Level = styled.output`
  width: 144px;
`;

function SmoothingBadge({ kind, color }: { kind: string; color: string }) {
  return (
    <svg width="75" height="30" viewBox="0 0 75 30" aria-hidden="true">
      <path d="M0 15h75" stroke={color} strokeWidth="2.5" />
      <rect x="14" y="1.5" width="47" height="27" rx="6" fill="#fff" stroke={color} strokeWidth="2.5" />
      {kind === 'Var' ? (
        <text x="35" y="20" fontSize="14" textAnchor="middle" fill={INK}>Var</text>
      ) : (
        <g fill={INK}>
          <text x="18" y="17" fontSize="15">1</text>
          <path d="M38 5L27 26" stroke={INK} strokeWidth="1.3" />
          <text x="39" y="25" fontSize="16">48</text>
        </g>
      )}
    </svg>
  );
}

const LEGEND = [
  { id: 1, name: 'Target t24', on: true, badge: '1/48', level: '63.8 dB', color: C.forest },
  { id: 2, name: 'Target t24', on: true, badge: '1/48', level: '36.0 dB', color: C.indigo },
  { id: 3, name: 'Target Target t24', on: true, badge: '1/48', level: '63.9 dB', color: C.orange },
  { id: 4, name: 'Target Target t24', on: true, badge: '1/48', level: '21.8 dB', color: C.green },
  { id: 5, name: 'L Apr 28', on: false, badge: '', level: '71.7 dB', color: C.blue },
  { id: 6, name: 'L Apr 28', on: false, badge: '', level: '71.7 dB', color: C.magenta },
  { id: 7, name: 'L Apr 28', on: false, badge: '', level: '71.8 dB', color: C.red },
  { id: 8, name: 'L Apr 28', on: false, badge: '', level: '71.4 dB', color: C.forest },
  { id: 9, name: 'L Apr 28', on: false, badge: '', level: '66.2 dB', color: C.indigo },
  { id: 10, name: 'L Apr 28', on: true, badge: 'Var', level: '80.0 dB', color: C.green },
  { id: 11, name: 'L Apr 28', on: true, badge: 'Var', level: '84.2 dB', color: C.blue },
  { id: 12, name: 'L Apr 28', on: true, badge: 'Var', level: '39.7 dB', color: C.violet },
];

/* ---------- status bar ---------- */

const StatusBar = styled.footer`
  display: flex;
  height: 38px;
  border-top: 1px solid #dcdcdc;
`;

const StatusCell = styled.div<{ $w: number; $start?: boolean }>`
  display: flex;
  flex: none;
  align-items: center;
  justify-content: ${p => (p.$start ? 'flex-start' : 'center')};
  gap: 16px;
  width: ${p => p.$w}px;
  padding: 0 5px;
  border-right: 1px solid #d8d8d8;
  white-space: nowrap;
`;

const Bits = styled.span<{ $color: string }>`
  font: 20px/22px "DejaVu Sans Mono", monospace;
  color: ${p => p.$color};
`;

export default function App() {
  const [tab, setTab] = useState('All SPL');
  return (
    <Page>
      <GlobalStyle />
      <SharedDefs />
      <Window>
        <TitleBar>
          <Lights>
            <Light type="button" aria-label="Close" $color="#ff5350" />
            <Light type="button" aria-label="Minimize" $color="#fab049" />
            <Light type="button" aria-label="Zoom" $color="#29c152" />
          </Lights>
          <Title>REW V5.31.3</Title>
        </TitleBar>

        <Toolbar>
          <ToolGroup>
            <Tool icon={<MeasureIcon />} label="Measure" />
            <Tool icon={<FolderIcon />} label="Open" />
            <Tool icon={<SaveIcon />} label="Save all" />
            <ToolGroup $gap={16}>
              <Tool icon={<RemoveIcon />} label="Remove all" />
              <Tool icon={<InfoIcon />} label="Info" />
            </ToolGroup>
          </ToolGroup>
          <ToolGroup>
            <ToolGroup $gap={16}>
              <Tool icon={<IRIcon />} label="IR windows" />
              <Tool icon={<MeterIcon />} label="SPL meter" />
            </ToolGroup>
            <Tool icon={<GeneratorIcon />} label="Generator" />
            <Tool icon={<ScopeIcon />} label="Scope" />
            <Tool icon={<LevelsIcon />} label="Levels" />
            <Tool icon={<OverlaysIcon />} label="Overlays" />
            <Tool icon={<RTAIcon />} label="RTA" />
            <ToolGroup $gap={16}>
              <Tool icon={<EQIcon />} label="EQ" />
              <Tool icon={<RoomIcon />} label="Room sim" />
            </ToolGroup>
          </ToolGroup>
          <ToolGroup>
            <Tool icon={<WrenchIcon />} label="Preferences" />
          </ToolGroup>
        </Toolbar>

        <Body>
          <Sidebar>
            <Scroller name="Measurements" before={8} thumb={801} after={2} />
            <CardList>
              <ExpandRow>
                <PushButton type="button" $w={110} $h={37} $start>Expand <Chevrons /></PushButton>
              </ExpandRow>
              {THUMBS.map((m, i) => <MeasurementCard key={m.id} m={m} index={i} />)}
            </CardList>
          </Sidebar>

          <GraphScroll>
            <Scroller name="Level axis" before={94} thumb={33} after={275} />
          </GraphScroll>

          <Main>
            <GraphHeader>
              <Lowered $top={3}><Tool icon={<CaptureIcon />} label="Capture" gap={8} /></Lowered>
              <Tabs role="tablist">
                {TAB_NAMES.map(name => (
                  <Tab key={name} type="button" role="tab" aria-selected={tab === name} $on={tab === name} onClick={() => setTab(name)}>{name}</Tab>
                ))}
                <Tab type="button" aria-label="More graphs"><Chevrons /></Tab>
              </Tabs>
              <Tool icon={<SeparateIcon />} label="Separate" gap={8} />
              <ViewTools>
                <Tool icon={<ScrollbarsIcon />} label="Scrollbars" gap={8} />
                <Tool icon={<FreqAxisIcon />} label="Freq. Axis" gap={8} />
                <Tool icon={<LimitsIcon />} label="Limits" gap={8} />
                <Tool icon={<ActionsIcon />} label="Actions" gap={8} />
                <Tool icon={<GearIcon />} label="Controls" gap={8} />
              </ViewTools>
            </GraphHeader>

            <AxisTitle>SPL</AxisTitle>
            <Graph />
            <HScroll><Scroller across name="Frequency axis" before={308} thumb={1047} after={113} /></HScroll>

            <Legend aria-label="Traces">
              {LEGEND.map(t => (
                <LegendItem key={t.id} $color={t.color}>
                  <LegendLabel>
                    <CheckBox type="checkbox" defaultChecked={t.on} />
                    {`${t.id}: ${t.name}`}
                  </LegendLabel>
                  <BadgeCell>{t.badge && <SmoothingBadge kind={t.badge} color={t.color} />}</BadgeCell>
                  <Level>{t.level}</Level>
                </LegendItem>
              ))}
            </Legend>
          </Main>
        </Body>

        <StatusBar>
          <StatusCell $w={137} $start>86/232MB</StatusCell>
          <StatusCell $w={73}>48 kHz</StatusCell>
          <StatusCell $w={180}>24-bit in, 24-bit out</StatusCell>
          <StatusCell $w={504}>
            <Bits $color="#86bc1c">XXXX XXXX</Bits>
            <Bits $color="#86bc1c">XXXX XXXX</Bits>
            <Bits $color="#86bc1c">XXXX XXXX</Bits>
            <Bits $color="#6f9cf0">0000 0000</Bits>
          </StatusCell>
          <StatusCell $w={158}>24-bit input data</StatusCell>
          <StatusCell $w={347}>Peak input before clipping 124 dB SPL</StatusCell>
          <StatusCell $w={182} />
        </StatusBar>
      </Window>
    </Page>
  );
}
